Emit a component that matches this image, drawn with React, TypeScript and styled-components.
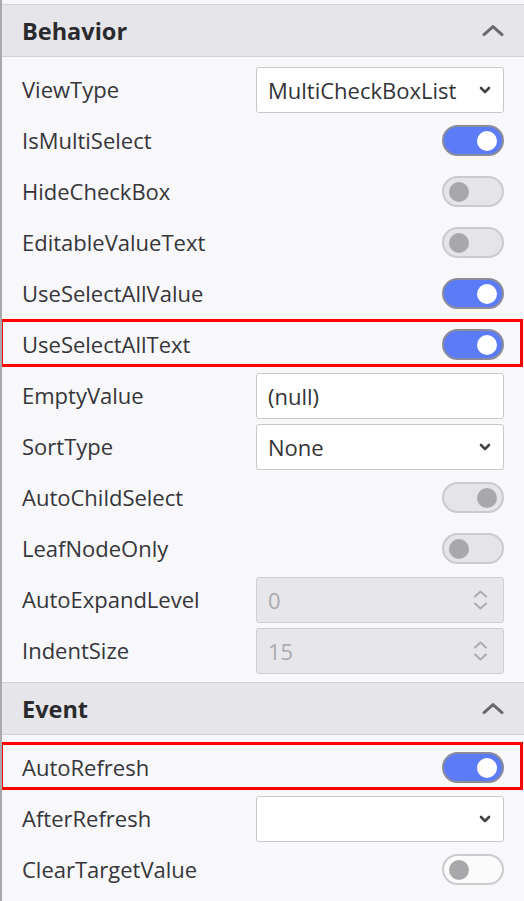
import React from "react";
import styled, { createGlobalStyle, css } from "styled-components";

const GlobalStyle = createGlobalStyle`
  html, body { margin: 0; padding: 0; background: #f8f8fa; }
  body { font-family: "Open Sans", "Noto Sans", "Liberation Sans", sans-serif; color: #333338; }
`;

const Panel = styled.div`
  box-sizing: border-box;
  width: 524px;
  min-height: 901px;
  padding-top: 4px;
  border-left: 2px solid #a9a9ad;
  background: #f8f8fa;
  overflow: hidden;
`;

const SectionHeader = styled.div`
  box-sizing: border-box;
  height: 53px;
  display: flex;
  align-items: center;
  justify-content: space-between;
  padding: 0 20px 0 20px;
  background: #e6e6ea;
  border-top: 1px solid #d2d2d6;
  border-bottom: 1px solid #d2d2d6;
`;

const SectionTitle = styled.span`
  font-size: 23.5px;
  font-weight: 700;
  color: #2a2a2e;
`;

const SectionBody = styled.div`
  padding: 7px 0 6px;
`;

const Row = styled.div<{ $marked?: boolean }>`
  position: relative;
  box-sizing: border-box;
  height: 51px;
  display: grid;
  grid-template-columns: 1fr 248px;
  align-items: center;
  padding: 0 20px 0 20px;
  ${(p) =>
    p.$marked &&
    css`
      &::after {
        content: "";
        position: absolute;
        left: -2px;
        right: 1px;
        top: 0;
        bottom: 3px;
        border: 3px solid #ff0000;
        pointer-events: none;
      }
    `}
`;

const Label = styled.span`
  font-size: 22px;
  line-height: 1;
  color: #35353a;
  white-space: nowrap;
  margin-top: -2px;
`;

const Field = styled.div<{ $disabled?: boolean }>`
  box-sizing: border-box;
  height: 46px;
  display: flex;
  align-items: center;
  justify-content: space-between;
  padding: 0 12px 0 11px;
  border: 1px solid ${(p) => (p.$disabled ? "#cfcfd3" : "#c8c8cc")};
  border-radius: 3px;
  background: ${(p) => (p.$disabled ? "#e7e7eb" : "#ffffff")};
  font-size: 22px;
  color: ${(p) => (p.$disabled ? "#a9a9ae" : "#333338")};
`;

const ToggleSlot = styled.div`
  display: flex;
  justify-content: flex-end;
`;

const Track = styled.div<{ $on?: boolean; $knobRight?: boolean; $light?: boolean }>`
  box-sizing: border-box;
  width: 62px;
  height: 31px;
  border-radius: 16px;
  display: flex;
  align-items: center;
  justify-content: ${(p) => (p.$knobRight ? "flex-end" : "flex-start")};
  padding: 0 5px;
  border: 2px solid ${(p) => (p.$on ? "#8a8c9c" : "#cbcbcf")};
  background: ${(p) => (p.$on ? "#5b7cf6" : p.$light ? "#fbfbfc" : "#e5e5e9")};
`;

const Knob = styled.div<{ $on?: boolean }>`
  width: 20px;
  height: 20px;
  border-radius: 50%;
  background: ${(p) => (p.$on ? "#ffffff" : "#a8a8ab")};
`;

const Spinner = styled.div`
  display: flex;
  flex-direction: column;
  gap: 4px;
  margin-right: 3px;
`;

const ChevronUp = ({ size = 22, color = "#6a6a6e", w = 3 }: { size?: number; color?: string; w?: number }) => (
  <svg width={size} height={size * 0.55} viewBox="0 0 22 12" fill="none">
    <path d="M2 10.5 L11 2.5 L20 10.5" stroke={color} strokeWidth={w} strokeLinecap="round" strokeLinejoin="round" />
  </svg>
);

const ChevronDown = ({ color = "#444448" }: { color?: string }) => (
  <svg width="12" height="8" viewBox="0 0 12 8" fill="none">
    <path d="M2 2 L6 6 L10 2" stroke={color} strokeWidth={2.6} strokeLinecap="round" strokeLinejoin="round" />
  </svg>
);

const SmallChevron = ({ up }: { up?: boolean }) => (
  <svg width="15" height="8" viewBox="0 0 15 8" fill="none">
    <path
      d={up ? "M2 6.5 L7.5 1.5 L13 6.5" : "M2 1.5 L7.5 6.5 L13 1.5"}
      stroke="#ababb0"
      strokeWidth={2}
      strokeLinecap="round"
      strokeLinejoin="round"
    />
  </svg>
);

type Item =
  | { label: string; kind: "toggle"; on?: boolean; knobRight?: boolean; light?: boolean; marked?: boolean }
  | { label: string; kind: "select"; value: string; marked?: boolean }
  | { label: string; kind: "text"; value: string; marked?: boolean }
  | { label: string; kind: "number"; value: string; marked?: boolean };

const behavior: Item[] = [
  { label: "ViewType", kind: "select", value: "MultiCheckBoxList" },
  { label: "IsMultiSelect", kind: "toggle", on: true, knobRight: true },
  { label: "HideCheckBox", kind: "toggle" },
  { label: "EditableValueText", kind: "toggle" },
  { label: "UseSelectAllValue", kind: "toggle", on: true, knobRight: true },
  { label: "UseSelectAllText", kind: "toggle", on: true, knobRight: true, marked: true },
  { label: "EmptyValue", kind: "text", value: "(null)" },
  { label: "SortType", kind: "select", value: "None" },
  { label: "AutoChildSelect", kind: "toggle", knobRight: true },
  { label: "LeafNodeOnly", kind: "toggle" },
  { label: "AutoExpandLevel", kind: "number", value: "0" },
  { label: "IndentSize", kind: "number", value: "15" },
];

const events: Item[] = [
  { label: "AutoRefresh", kind: "toggle", on: true, knobRight: true, marked: true },
  { label: "AfterRefresh", kind: "select", value: "" },
  { label: "ClearTargetValue", kind: "toggle", light: true },
];

const Control = ({ item }: { item: Item }) => {
  switch (item.kind) {
    case "toggle":
      return (
        <ToggleSlot>
          <Track $on={item.on} $knobRight={item.knobRight} $light={item.light}>
            <Knob $on={item.on} />
          </Track>
        </ToggleSlot>
      );
    case "select":
      return (
        <Field>
          <span>{item.value}</span>
          <ChevronDown />
        </Field>
      );
    case "text":
      return (
        <Field>
          <span>{item.value}</span>
        </Field>
      );
    case "number":
      return (
        <Field $disabled>
          <span>{item.value}</span>
          <Spinner>
            <SmallChevron up />
            <SmallChevron />
          </Spinner>
        </Field>
      );
  }
};

const Section = ({ title, items }: { title: string; items: Item[] }) => (
  <section>
    <SectionHeader>
      <SectionTitle>{title}</SectionTitle>
      <ChevronUp />
    </SectionHeader>
    <SectionBody>
      {items.map((it) => (
        <Row key={it.label} $marked={it.marked}>
          <Label>{it.label}</Label>
          <Control item={it} />
        </Row>
      ))}
    </SectionBody>
  </section>
);

export default function App() {
  return (
    <>
      <GlobalStyle />
      <Panel>
        <Section title="Behavior" items={behavior} />
        <Section title="Event" items={events} />
      </Panel>
    </>
  );
}
